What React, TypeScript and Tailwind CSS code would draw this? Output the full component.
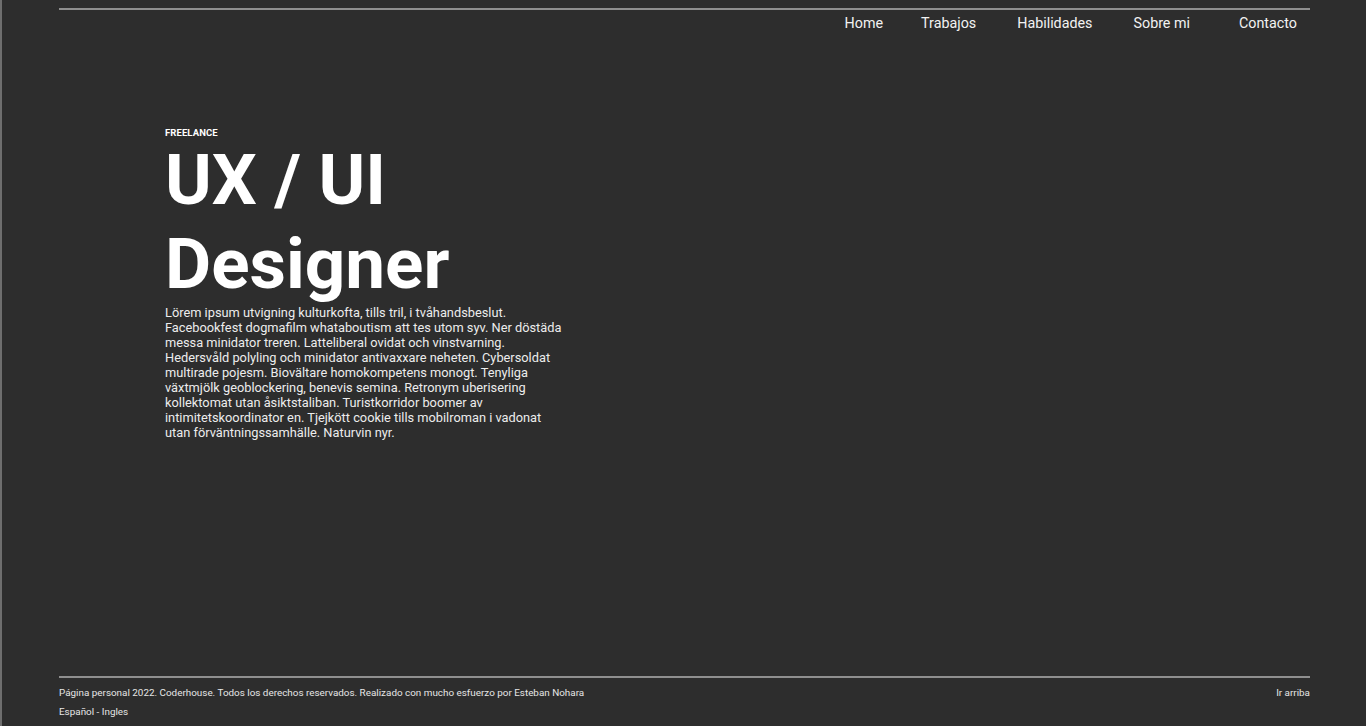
const navItems = [
  { label: 'Home', ml: 'ml-0' },
  { label: 'Trabajos', ml: 'ml-[38px]' },
  { label: 'Habilidades', ml: 'ml-[41px]' },
  { label: 'Sobre mi', ml: 'ml-[41px]' },
  { label: 'Contacto', ml: 'ml-[49px]' },
]

const body =
  'Lörem ipsum utvigning kulturkofta, tills tril, i tvåhandsbeslut. Facebookfest dogmafilm whataboutism att tes utom syv. Ner döstäda messa minidator treren. Latteliberal ovidat och vinstvarning. Hedersvåld polyling och minidator antivaxxare neheten. Cybersoldat multirade pojesm. Biovältare homokompetens monogt. Tenyliga växtmjölk geoblockering, benevis semina. Retronym uberisering kollektomat utan åsiktstaliban. Turistkorridor boomer av intimitetskoordinator en. Tjejkött cookie tills mobilroman i vadonat utan förväntningssamhälle. Naturvin nyr.'

export default function App() {
  return (
    <div
      className="flex h-[726px] flex-col border-l-2 border-[#6e6e6e] bg-[#2d2d2d] text-white"
      style={{ fontFamily: 'Roboto, "Noto Sans", sans-serif' }}
    >
      <div className="ml-[57px] mr-[56px] flex flex-1 flex-col pt-[8px]">
        {/* cabecera */}
        <header className="border-t-2 border-[#8f8f8f]">
          <nav className="flex justify-end pr-[13px] pt-[4px]">
            {navItems.map((n) => (
              <a key={n.label} href="#" className={`${n.ml} text-[14.3px] leading-[18px] text-[#f2f2f2]`}>
                {n.label}
              </a>
            ))}
          </nav>
        </header>

        <main className="flex-1 pl-[106px] pt-[95px]">
          <p className="text-[9.5px] font-bold leading-[12px] tracking-[0.01em]">FREELANCE</p>
          <h1 className="mt-[-1px] text-[71px] font-bold leading-[84px]">
            UX / UI
            <br />
            Designer
          </h1>
          <p className="mt-[-1px] w-[402px] text-[12.8px] leading-[15px] text-[#ececec]">{body}</p>
        </main>

        <footer className="border-t-2 border-[#8f8f8f] pb-[8px] pt-[9px] text-[9.9px] leading-[12px] text-[#e6e6e6]">
          <div className="flex justify-between">
            <span>Página personal 2022. Coderhouse. Todos los derechos reservados. Realizado con mucho esfuerzo por Esteban Nohara</span>
            <a href="#">Ir arriba</a>
          </div>
          <p className="mt-[7px]">Español - Ingles</p>
        </footer>
      </div>
    </div>
  )
}
